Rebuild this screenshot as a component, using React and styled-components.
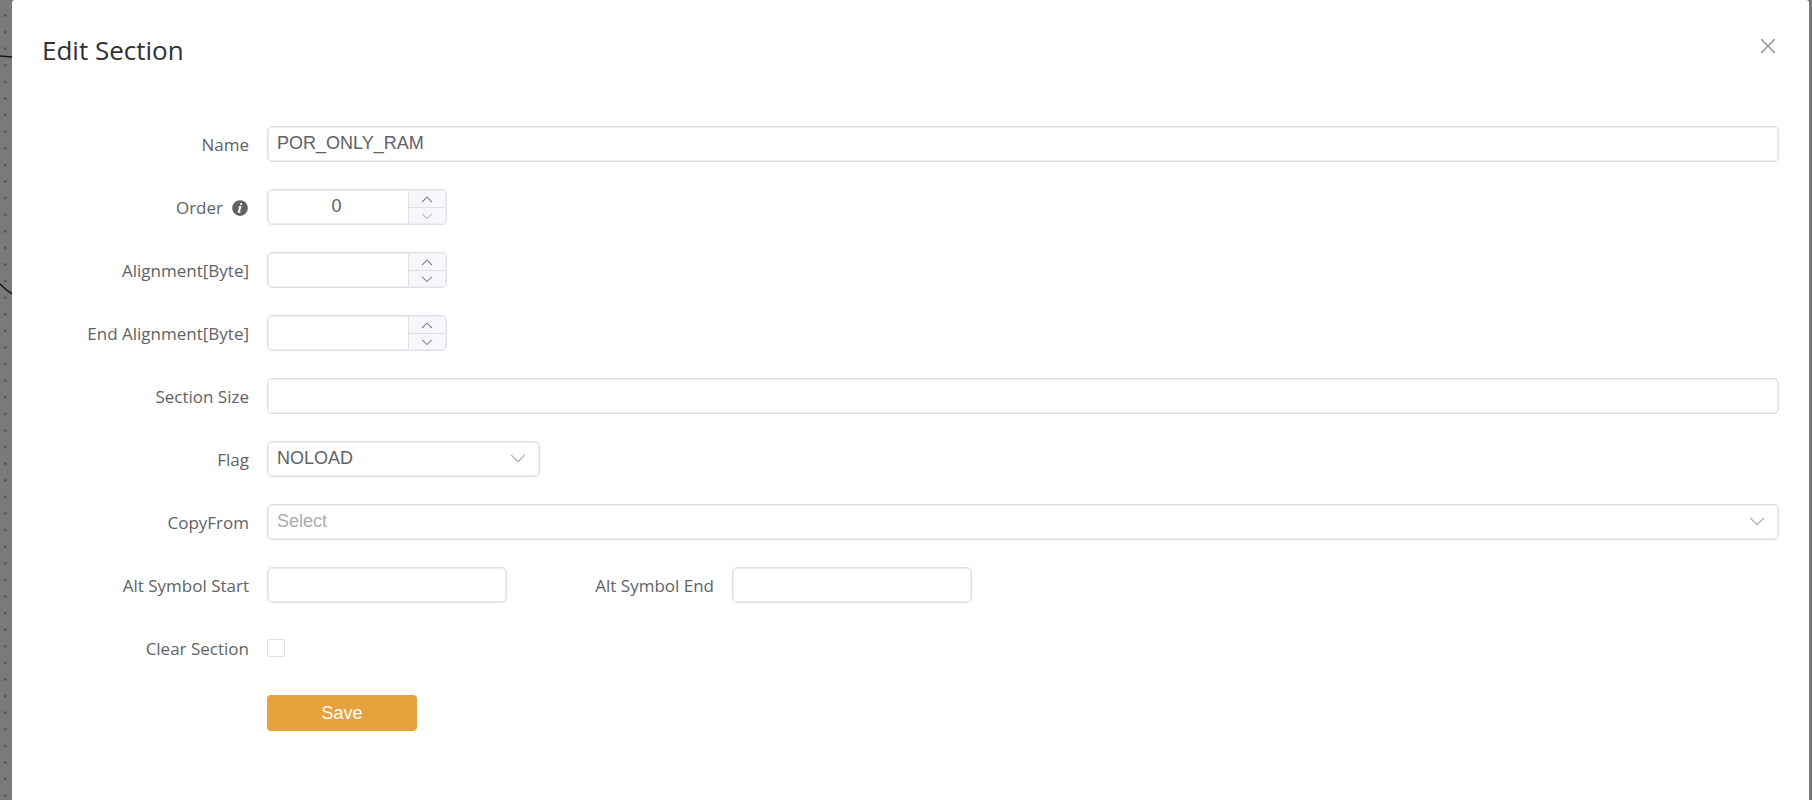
import React, { useState } from 'react';
import styled, { createGlobalStyle, css } from 'styled-components';

const GlobalStyle = createGlobalStyle`
  * {
    box-sizing: border-box;
  }
  body {
    margin: 0;
    background: #787978;
    color: #606266;
    font-family: 'Open Sans', 'Noto Sans', sans-serif;
    font-size: 17px;
  }
`;

const Canvas = styled.svg`
  position: fixed;
  inset: 0;
  width: 100%;
  height: 100%;
`;
const Overlay = styled.div`
  position: relative;
  display: flex;
  min-height: 100vh;
  padding: 0 3px 0 12px;
`;
const Dialog = styled.section`
  flex: 1;
  padding: 30px 30px 40px;
  background: white;
  border-radius: 3px 3px 0 0;
`;
const Header = styled.header`
  display: flex;
  align-items: flex-start;
  justify-content: space-between;
  margin-bottom: 56px;
`;
const Title = styled.h1`
  margin: 0;
  color: #303133;
  font-size: 26px;
  font-weight: 400;
  line-height: 40px;
`;
const CloseButton = styled.button`
  display: flex;
  margin-right: -1px;
  padding: 4px 0;
  border: 0;
  background: none;
  color: #909399;
  cursor: pointer;
`;
const Form = styled.form`
  display: flex;
  flex-direction: column;
  gap: 27px;
`;
const FormRow = styled.div`
  display: flex;
`;
const FormItem = styled.div`
  display: flex;
  align-items: center;
  gap: 18px;
  height: 36px;
`;
const Label = styled.label`
  display: flex;
  flex: none;
  align-items: center;
  justify-content: flex-end;
  gap: 8px;
  width: 207px;
  padding-top: 1px;
  line-height: 36px;
`;

const box = css`
  border: 1px solid #dcdfe6;
  border-radius: 5px;
  box-shadow: inset 0 0 0 1px #eceef2;
  background: white;
`;
const fieldText = css`
  color: #606266;
  font-family: 'Liberation Sans', Arial, sans-serif;
  font-size: 18px;
  line-height: 20px;
  outline: none;
`;
const Input = styled.input`
  ${box}
  ${fieldText}
  width: ${({ $width }) => $width || '100%'};
  height: 36px;
  padding: 0 9px 2px;

  &:focus {
    border-color: #e6a23c;
  }
`;
const NumberBox = styled.div`
  ${box}
  display: flex;
  width: 180px;
  height: 36px;
  padding: 1px;
  overflow: hidden;
`;
const NumberInput = styled.input`
  ${fieldText}
  flex: 1;
  min-width: 0;
  padding: 0 4px 2px 0;
  border: 0;
  background: none;
  text-align: center;
`;
const Steps = styled.div`
  display: grid;
  grid-template-rows: 17px 15px;
  width: 37px;
  border-left: 1px solid #dcdfe6;
  background: #f5f7fa;
`;
const Step = styled.button`
  display: flex;
  align-items: center;
  justify-content: center;
  min-height: 0;
  padding: 0;
  border: 0;
  background: none;
  color: #606266;
  cursor: pointer;

  &:first-child {
    border-bottom: 1px solid #dcdfe6;
  }
  &:disabled {
    color: #a8abb2;
    cursor: not-allowed;
  }
`;
const SelectBox = styled.div`
  display: grid;
  align-items: center;
  width: ${({ $width }) => $width || '100%'};

  > * {
    grid-area: 1 / 1;
  }
  svg {
    justify-self: end;
    margin: 0 12px 2px 0;
    color: #a8abb2;
    pointer-events: none;
  }
`;
const NativeSelect = styled.select`
  ${box}
  ${fieldText}
  width: 100%;
  height: 36px;
  padding: 0 36px 2px 9px;
  color: ${({ $empty }) => ($empty ? '#a8abb2' : '#606266')};
  appearance: none;
`;
const Checkbox = styled.input`
  width: 18px;
  height: 18px;
  margin: 0;
  border: 1px solid #dcdfe6;
  border-radius: 2px;
  background: white;
  appearance: none;

  &:checked {
    border-color: #e6a23c;
    background: #e6a23c;
  }
`;
const SaveButton = styled.button`
  width: 150px;
  height: 36px;
  margin: 2px 0 0 225px;
  padding: 0;
  border: 0;
  border-radius: 4px;
  background: #e6a23c;
  color: white;
  font-family: 'Liberation Sans', Arial, sans-serif;
  font-size: 18px;
  line-height: 36px;
  cursor: pointer;
`;

const icons = {
  up: 'm488.832 344.32-339.84 356.672a32 32 0 0 0 0 44.16l.384.384a29.44 29.44 0 0 0 42.688 0l320-335.872 319.872 335.872a29.44 29.44 0 0 0 42.688 0l.384-.384a32 32 0 0 0 0-44.16L535.168 344.32a32 32 0 0 0-46.336 0',
  down: 'M831.872 340.864 512 652.672 192.128 340.864a30.592 30.592 0 0 0-42.752 0 29.12 29.12 0 0 0 0 41.6L489.664 714.24a32 32 0 0 0 44.672 0l340.288-331.712a29.12 29.12 0 0 0 0-41.728 30.592 30.592 0 0 0-42.752 0z',
  close:
    'M764.288 214.592 512 466.88 259.712 214.592a31.936 31.936 0 0 0-45.12 45.12L466.752 512 214.528 764.224a31.936 31.936 0 1 0 45.12 45.184L512 557.184l252.288 252.288a31.936 31.936 0 0 0 45.12-45.12L557.12 512.064l252.288-252.352a31.936 31.936 0 1 0-45.12-45.184z',
  info: 'M512 64a448 448 0 1 1 0 896.064A448 448 0 0 1 512 64m67.2 275.072c33.28 0 60.288-23.104 60.288-57.344s-27.072-57.344-60.288-57.344c-33.28 0-60.16 23.104-60.16 57.344s26.88 57.344 60.16 57.344M590.912 699.2c0-6.848 2.368-24.64 1.024-34.752l-52.608 60.544c-10.88 11.456-24.512 19.392-30.912 17.28a12.992 12.992 0 0 1-8.256-14.72l87.68-276.992c7.168-35.136-12.544-67.2-54.336-71.296-44.096 0-108.992 44.736-148.48 101.504 0 6.784-1.28 23.68.064 33.792l52.544-60.608c10.88-11.328 23.552-19.328 29.952-17.152a12.8 12.8 0 0 1 7.808 16.128L388.48 728.576c-10.048 32.256 8.96 63.872 55.04 71.04 67.84 0 107.904-43.648 147.456-100.416z',
};

function Icon({ name, size }) {
  return (
    <svg viewBox="0 0 1024 1024" width={size} height={size} fill="currentColor" aria-hidden="true">
      <path d={icons[name]} />
    </svg>
  );
}

function Backdrop() {
  return (
    <Canvas aria-hidden="true">
      <defs>
        <pattern id="dots" x="-3" y="7.2" width="16.6" height="16.6" patternUnits="userSpaceOnUse">
          <circle cx="8.3" cy="8.3" r="1.3" fill="#4c4c4c" />
        </pattern>
      </defs>
      <rect width="12" height="100%" fill="#7a7a7a" />
      <rect width="12" height="100%" fill="url(#dots)" />
      <path d="M0 56 L14 57.3 M0 284 Q6 290 14 295.5" fill="none" stroke="#161616" strokeWidth="1.5" />
    </Canvas>
  );
}

function NumberField({ id, value, onChange, min }) {
  const current = value === '' ? 0 : Number(value);
  return (
    <NumberBox>
      <NumberInput id={id} inputMode="numeric" value={value} onChange={(e) => onChange(e.target.value)} />
      <Steps>
        <Step type="button" aria-label="Increase" onClick={() => onChange(current + 1)}>
          <Icon name="up" size={14} />
        </Step>
        <Step
          type="button"
          aria-label="Decrease"
          disabled={value !== '' && current <= min}
          onClick={() => onChange(Math.max(min, current - 1))}
        >
          <Icon name="down" size={14} />
        </Step>
      </Steps>
    </NumberBox>
  );
}

function SelectField({ id, value, onChange, options, width }) {
  return (
    <SelectBox $width={width}>
      <NativeSelect id={id} value={value} $empty={value === ''} onChange={(e) => onChange(e.target.value)}>
        {options.map((option) => (
          <option key={option} value={option}>
            {option || 'Select'}
          </option>
        ))}
      </NativeSelect>
      <Icon name="down" size={20} />
    </SelectBox>
  );
}

export default function App() {
  const [section, setSection] = useState({
    name: 'POR_ONLY_RAM',
    order: 0,
    alignment: '',
    endAlignment: '',
    size: '',
    flag: 'NOLOAD',
    copyFrom: '',
    symbolStart: '',
    symbolEnd: '',
    clear: false,
  });
  const set = (key) => (value) => setSection({ ...section, [key]: value });
  const bind = (key) => ({
    id: key,
    value: section[key],
    onChange: (e) => set(key)(e.target.value),
  });

  return (
    <>
      <GlobalStyle />
      <Backdrop />
      <Overlay>
        <Dialog role="dialog" aria-labelledby="dialog-title">
          <Header>
            <Title id="dialog-title">Edit Section</Title>
            <CloseButton type="button" aria-label="Close">
              <Icon name="close" size={24} />
            </CloseButton>
          </Header>
          <Form onSubmit={(e) => e.preventDefault()}>
            <FormItem>
              <Label htmlFor="name">Name</Label>
              <Input {...bind('name')} />
            </FormItem>
            <FormItem>
              <Label htmlFor="order">
                Order
                <Icon name="info" size={18} />
              </Label>
              <NumberField id="order" value={section.order} onChange={set('order')} min={0} />
            </FormItem>
            <FormItem>
              <Label htmlFor="alignment">Alignment[Byte]</Label>
              <NumberField id="alignment" value={section.alignment} onChange={set('alignment')} min={0} />
            </FormItem>
            <FormItem>
              <Label htmlFor="endAlignment">End Alignment[Byte]</Label>
              <NumberField id="endAlignment" value={section.endAlignment} onChange={set('endAlignment')} min={0} />
            </FormItem>
            <FormItem>
              <Label htmlFor="size">Section Size</Label>
              <Input {...bind('size')} />
            </FormItem>
            <FormItem>
              <Label htmlFor="flag">Flag</Label>
              <SelectField
                id="flag"
                width="273px"
                value={section.flag}
                onChange={set('flag')}
                options={['NOLOAD', 'COPY', 'DSECT']}
              />
            </FormItem>
            <FormItem>
              <Label htmlFor="copyFrom">CopyFrom</Label>
              <SelectField id="copyFrom" value={section.copyFrom} onChange={set('copyFrom')} options={['']} />
            </FormItem>
            <FormRow>
              <FormItem>
                <Label htmlFor="symbolStart">Alt Symbol Start</Label>
                <Input {...bind('symbolStart')} $width="240px" />
              </FormItem>
              <FormItem>
                <Label htmlFor="symbolEnd">Alt Symbol End</Label>
                <Input {...bind('symbolEnd')} $width="240px" />
              </FormItem>
            </FormRow>
            <FormItem>
              <Label htmlFor="clear">Clear Section</Label>
              <Checkbox
                id="clear"
                type="checkbox"
                checked={section.clear}
                onChange={(e) => set('clear')(e.target.checked)}
              />
            </FormItem>
            <SaveButton type="submit">Save</SaveButton>
          </Form>
        </Dialog>
      </Overlay>
    </>
  );
}
